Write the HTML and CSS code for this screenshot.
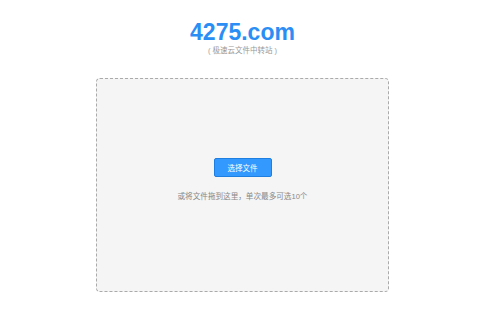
FILE: index.html
```html
<!DOCTYPE html>
<html lang="zh">
<head>
<meta charset="utf-8">
<title>4275.com</title>
<link rel="stylesheet" href="styles.css">
</head>
<body>
<div class="page">
  <header class="head">
    <h1 class="logo">4275.com</h1>
    <p class="tagline">( 极速云文件中转站 )</p>
  </header>
  <div class="drop">
    <button class="pick">选择文件</button>
    <p class="hint">或将文件拖到这里，单次最多可选10个</p>
  </div>
</div>
</body>
</html>
```
FILE: styles.css
```css
html, body { margin: 0; padding: 0; background: #fff; }
body { font-family: "Liberation Sans", "Noto Sans CJK SC", sans-serif; }
.page {
  width: 485px;
  display: flex;
  flex-direction: column;
  align-items: center;
  padding-top: 19px;
}
.head { display: flex; flex-direction: column; align-items: center; }
.logo {
  margin: 0;
  font-size: 23px;
  line-height: 26px;
  font-weight: bold;
  color: #2b8ef5;
}
.tagline {
  margin: 1px 0 0;
  font-size: 7.5px;
  line-height: 10px;
  color: #999;
}
.drop {
  margin-top: 22px;
  width: 291px;
  height: 212px;
  border: 1px dashed #aaa;
  border-radius: 4px;
  background: #f5f5f5;
  display: flex;
  flex-direction: column;
  align-items: center;
  padding-top: 79px;
  box-sizing: content-box;
  height: 133px;
}
.pick {
  width: 58px;
  height: 19px;
  padding: 0;
  border: 1px solid #1f7fe0;
  border-radius: 2px;
  background: #3399ff;
  color: #fff;
  font-family: "Noto Sans CJK SC", sans-serif;
  font-size: 7.5px;
}
.hint {
  margin: 15px 0 0;
  font-size: 7.6px;
  line-height: 10px;
  color: #888;
}
```
